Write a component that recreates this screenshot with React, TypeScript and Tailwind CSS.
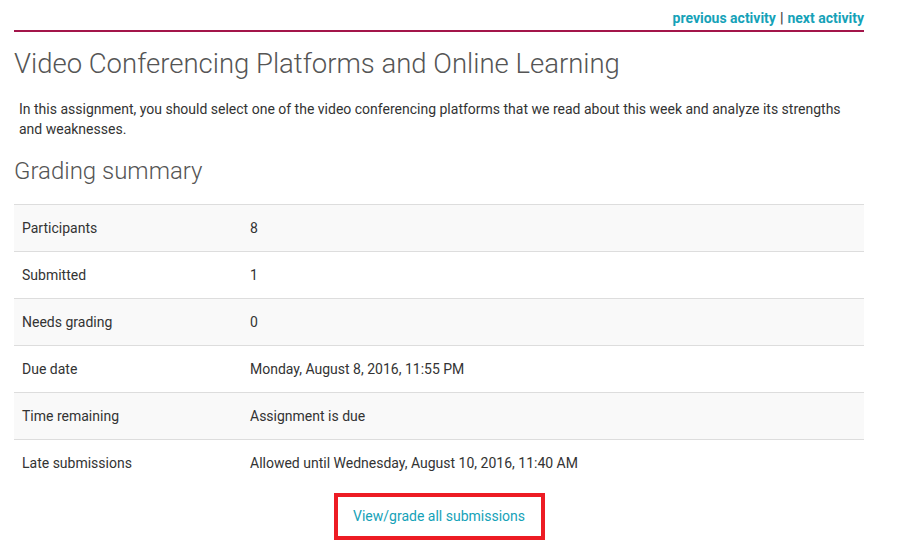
import React from "react";

const rows: [string, string][] = [
  ["Participants", "8"],
  ["Submitted", "1"],
  ["Needs grading", "0"],
  ["Due date", "Monday, August 8, 2016, 11:55 PM"],
  ["Time remaining", "Assignment is due"],
  ["Late submissions", "Allowed until Wednesday, August 10, 2016, 11:40 AM"],
];

export default function App() {
  return (
    <div className="w-[900px] h-[555px] bg-white overflow-hidden" style={{ fontFamily: "Roboto, 'Liberation Sans', sans-serif" }}>
      <div className="ml-[14px] w-[850px]">
        <div className="h-[32px] flex items-start justify-end border-b-2 border-[#a3154a] pt-[9px] text-[14px] font-bold leading-[18px]">
          <span className="text-[#15a2b8]">previous activity</span>
          <span className="text-[#444] mx-[4px]">|</span>
          <span className="text-[#15a2b8]">next activity</span>
        </div>
        <h1 className="mt-[14px] text-[27.5px] font-light text-[#555] leading-[36px]">
          Video Conferencing Platforms and Online Learning
        </h1>
        <p className="mt-[17px] pl-[5px] pr-[20px] text-[14px] leading-[20px] text-[#333]">
          In this assignment, you should select one of the video conferencing platforms that we read about this week and analyze its strengths and weaknesses.
        </p>
        <h2 className="mt-[17px] text-[24px] font-light text-[#555] leading-[30px]">Grading summary</h2>
        <div className="mt-[18px]">
          {rows.map(([k, v], i) => (
            <div
              key={k}
              className={`flex h-[47px] items-center border-t border-[#dddddd] text-[14px] text-[#333] ${i % 2 === 0 ? "bg-[#f9f9f9]" : "bg-white"}`}
            >
              <div className="w-[236px] pl-[8px]">{k}</div>
              <div>{v}</div>
            </div>
          ))}
        </div>
        <div className="flex justify-center mt-[7px]">
          <div className="w-[211px] h-[47px] border-[4px] border-[#ed1c24] flex items-center justify-center text-[14px] text-[#15a2b8]">
            View/grade all submissions
          </div>
        </div>
      </div>
    </div>
  );
}
